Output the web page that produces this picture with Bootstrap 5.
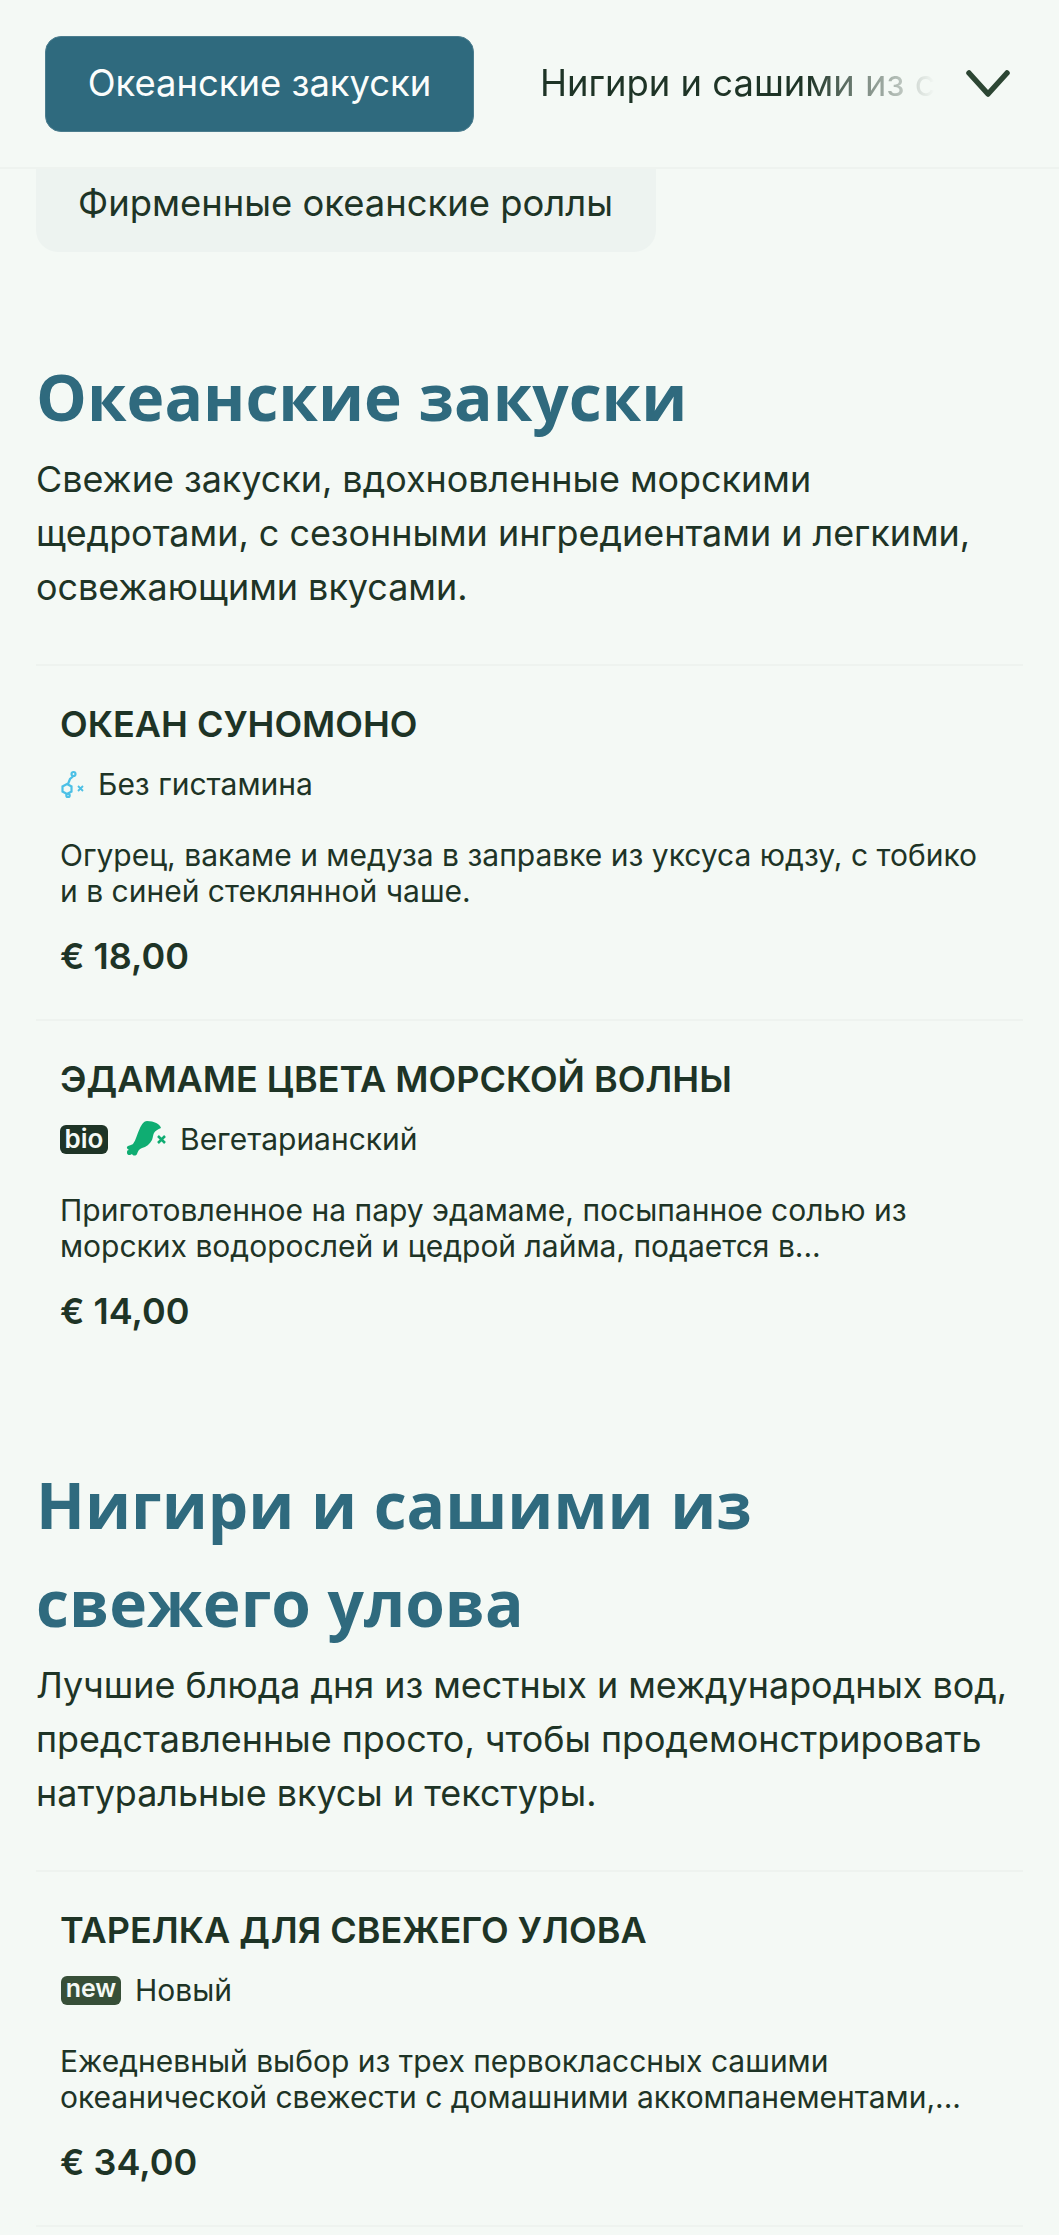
<!doctype html>
<html lang="ru"><head><meta charset="utf-8"><title>Меню</title>
<link rel="stylesheet" href="https://cdn.jsdelivr.net/npm/bootstrap@5.3.0/dist/css/bootstrap.min.css">
<style>
html,body{height:2235px;overflow:hidden}
body{background:#f4f9f5;color:#1e3426;font-family:Inter,"Noto Sans",sans-serif}
.topbar{height:169px;padding:36px 36px 0 45px;border-bottom:2px solid #eef3ef;gap:66px}
.tab-on{width:429px;height:96px;background:#2f6a7e;color:#fbfdfc;border-radius:16px;font-size:36.4px;line-height:48px;padding:22px 0;text-align:center;flex:none;border:1px solid #4b7d8e}
.tab-off{font-size:36.4px;line-height:48px;white-space:nowrap;overflow:hidden;width:395px;flex:none;margin-top:23px;-webkit-mask-image:linear-gradient(90deg,#000 68%,transparent 100%);mask-image:linear-gradient(90deg,#000 68%,transparent 100%)}
.chev{margin-left:-35px;margin-top:34px;flex:none}
.tab-drop{width:620px;height:83px;margin:0 0 0 36px;background:#edf3f0;border-radius:0 0 22px 22px;font-size:36.4px;line-height:48px;padding:10px 42px 0}
.sect-h{font-family:"Open Sans",sans-serif;font-weight:700;font-size:64px;line-height:98px;color:#2f6a7e;margin:0;padding:0 36px 6px}
.sect-d{font-size:35.9px;line-height:54px;margin:0;padding:0 36px 50px}
.dish{margin:0 36px;border-top:2px solid #eef3ef;padding:34px 24px 0;height:355px}
.dish-end{margin:0 36px;border-top:2px solid #eef3ef;height:8px}
.dish-t{font-size:36px;line-height:48px;font-weight:600;margin:0;color:#1e3426}
.tags{font-size:30px;line-height:44px;margin-top:14px;gap:12px}
.tag-new{gap:14px}
.dish-d{font-size:30px;line-height:36px;margin:31px 0 0}
.price{font-size:36px;line-height:48px;font-weight:600;margin-top:23px}
.bdg{border-radius:6px;color:#f4f9f5;font-weight:600;font-size:26px;line-height:27px;display:inline-block;text-align:center;flex:none}
.bdg-bio{background:#1e3426;width:48px;height:29px}
.bdg-new{background:#374f38;width:60px;height:29px;font-size:25px;line-height:25px;margin-left:1px}
.ico-drum{margin-left:4px;flex:none}
.tag-veg{margin-left:-2px}
</style></head><body>
<header class="topbar d-flex">
 <div class="tab-on">Океанские закуски</div>
 <div class="tab-off">Нигири и сашими из свежего улова</div>
 <svg class="chev" width="44" height="28" viewBox="0 0 44 28" fill="none" stroke="#2c4633" stroke-width="5.5" stroke-linecap="round" stroke-linejoin="round"><path d="M3 3l19 21L41 3"/></svg>
</header>
<div class="tab-drop">Фирменные океанские роллы</div>
<main>
<section style="padding-top:96px">
 <h2 class="sect-h">Океанские закуски</h2>
 <p class="sect-d">Свежие закуски, вдохновленные морскими щедротами, с сезонными ингредиентами и легкими, освежающими вкусами.</p>
 <article class="dish">
  <h3 class="dish-t">ОКЕАН СУНОМОНО</h3>
  <div class="tags d-flex align-items-center">
   <svg width="26" height="28" viewBox="0 0 26 28" fill="none" stroke="#4cc0e6" stroke-width="2.2" class="flex-none"><path d="M7 14l4.5 2.500v5L7 24l-4.500-2.500v-5z"/><path d="M8 14l2-5 3-2.500"/><circle cx="13.500" cy="4" r="2"/><circle cx="8" cy="25.500" r="1.700"/><path d="M18 16l5 5m0-5l-5 5" stroke-width="1.800"/></svg>
   <span>Без гистамина</span>
  </div>
  <p class="dish-d">Огурец, вакаме и медуза в заправке из уксуса юдзу, с тобико и в синей стеклянной чаше.</p>
  <div class="price">€ 18,00</div>
 </article>
 <article class="dish">
  <h3 class="dish-t">ЭДАМАМЕ ЦВЕТА МОРСКОЙ ВОЛНЫ</h3>
  <div class="tags d-flex align-items-center">
   <span class="bdg bdg-bio">bio</span>
   <svg class="ico-drum" width="46" height="38" viewBox="0 0 46 38" fill="#0fad72"><path d="M23 1C30 1 36 4 37 8C34 9 31 11 30 13C29 15 29 17 28 20C26 24 22 27 18 28C15 29 14 31 13 34C12 36 9 36 8 34C6 36 3 35 3 33C3 31 3 30 5 30C3 29 2 27 4 26C6 25 8 25 9 24C12 20 13 14 16 8C18 4 20 1 23 1Z"/><path d="M34 16l7 7m0-7l-7 7" fill="none" stroke="#0fad72" stroke-width="2.500"/></svg>
   <span class="tag-veg">Вегетарианский</span>
  </div>
  <p class="dish-d">Приготовленное на пару эдамаме, посыпанное солью из морских водорослей и цедрой лайма, подается в...</p>
  <div class="price">€ 14,00</div>
 </article>
</section>
<section style="padding-top:82px">
 <h2 class="sect-h">Нигири и сашими из свежего улова</h2>
 <p class="sect-d">Лучшие блюда дня из местных и международных вод, представленные просто, чтобы продемонстрировать натуральные вкусы и текстуры.</p>
 <article class="dish">
  <h3 class="dish-t">ТАРЕЛКА ДЛЯ СВЕЖЕГО УЛОВА</h3>
  <div class="tags tag-new d-flex align-items-center">
   <span class="bdg bdg-new">new</span>
   <span>Новый</span>
  </div>
  <p class="dish-d">Ежедневный выбор из трех первоклассных сашими океанической свежести с домашними аккомпанементами,...</p>
  <div class="price">€ 34,00</div>
 </article>
 <div class="dish-end"></div>
</section>
</main>
<script src="https://cdn.jsdelivr.net/npm/bootstrap@5.3.0/dist/js/bootstrap.bundle.min.js"></script>
</body></html>
